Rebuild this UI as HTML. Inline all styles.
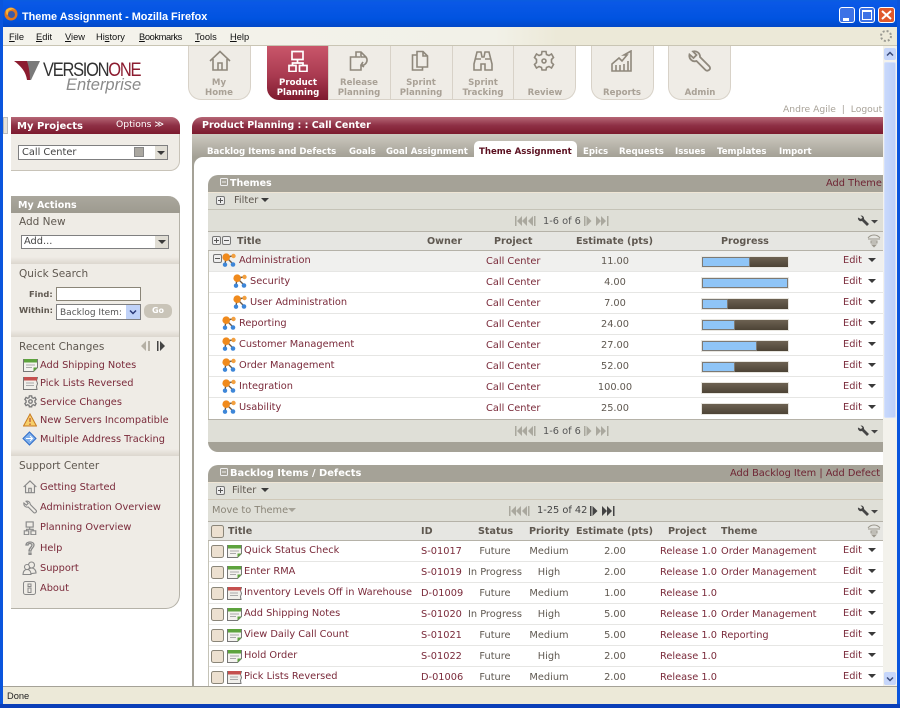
<!DOCTYPE html>
<html lang="en"><head><meta charset="utf-8"><title>Theme Assignment - Mozilla Firefox</title>
<style>
html,body{margin:0;padding:0;background:#fff;overflow:hidden}
#p{position:relative;width:900px;height:708px;overflow:hidden;background:#fff;font:9.8px/12px "DejaVu Sans",sans-serif;color:#5f5850;filter:blur(.3px)}
#p div,#p svg,#p span{position:absolute}
.t{white-space:nowrap;margin-top:1px}
.b{font-weight:bold}
.w{color:#fff}
.l{color:#7a2a3a}
.h{font-size:10.500px;color:#5f5850}
.m{font:9.300px/12px "Liberation Sans",sans-serif;color:#111;top:30px}
.m u{position:static}
.nav{top:46px;height:54px;background:#efece6;border:1px solid #d8d2c8;border-top:0;box-sizing:border-box}
.nt{width:62px;text-align:center;font-weight:bold;font-size:8.6px;line-height:10px;color:#a9a196;top:78px}
.tab{top:146px;font-weight:bold;font-size:8.6px;color:#fff;white-space:nowrap}
.r{left:209px;width:674px;height:21px;background:#fff;border-bottom:1px solid #e6e6e4;box-sizing:content-box}
.r span{white-space:nowrap;top:5px}
.r .u{top:4px;color:#7a2a3a}
.r .cc{left:277px;color:#7a2a3a}
.r .est{left:356px;width:100px;text-align:center}
.r .ed{left:634px;top:4px;color:#7a2a3a}
.r .id{left:212px;color:#7a2a3a}
.r .st{left:236px;width:100px;text-align:center}
.r .pr{left:290px;width:100px;text-align:center}
.r .pj{left:451px;color:#7a2a3a}
.r .th{left:512px;color:#7a2a3a}
.pb{left:493px;top:6px;width:86px;height:10px;background:linear-gradient(#6d6252,#4d4436);outline:1px solid #e8e6e0}
.pb div{left:0;top:0;height:8px;background:#8fc5f7;border:1px solid #7d7a74}
.ca{width:0;height:0;border-left:4px solid transparent;border-right:4px solid transparent;border-top:4px solid #3a3a3a}
.hd{font-weight:bold;color:#5f5850;font-size:9.600px}
.sb{background:#dfdfd7}
.li{left:40px;color:#7a2a3a;white-space:nowrap;margin-top:3px}
.h{margin-top:1px}
.sel{background:#fff;border:1px solid #7f7f80;box-sizing:border-box;margin-top:0}
.dv{left:11px;width:168px;height:7px;background:linear-gradient(#efece6,#dcd7ce)}
</style></head><body>
<svg width="0" height="0" style="position:absolute">
<defs>
<symbol id="theme" viewBox="0 0 14 14"><path d="M4 4L11 11M4 4L3 12M4 4L11 3" stroke="#6b5a48" stroke-width="1.4" fill="none"/><circle cx="4.200" cy="4.200" r="3.800" fill="#f08a1c"/><circle cx="11.500" cy="3" r="2.200" fill="#f2a040"/><circle cx="3" cy="11.700" r="2.200" fill="#3d86d8"/><circle cx="11" cy="11.500" r="2.300" fill="#3d86d8"/></symbol>
<symbol id="story" viewBox="0 0 15 14"><path d="M.5 1.500h14v8l-4 4H.5z" fill="#f4f3ef" stroke="#777"/><rect x="1" y="1" width="13" height="3.500" fill="#5da33d"/><path d="M3 7h9M3 9.500h6" stroke="#aaa"/><path d="M10.500 13.500v-4h4z" fill="#5da33d"/></symbol>
<symbol id="defect" viewBox="0 0 15 14"><path d="M.5 1.500h14l-1 3 1 3-1 3 .5 3H.5z" fill="#f0efea" stroke="#777"/><rect x="1" y="1" width="13" height="3.500" fill="#c5504f"/><path d="M3 7h8M3 9.500h8" stroke="#aaa"/></symbol>
<symbol id="wr" viewBox="0 0 22 12"><path d="M2 2.500a3 3 0 0 0 4 3.500l5 5 2-2-5-5a3 3 0 0 0-3.500-3.500l2 2-1.500 1.500z" fill="#444"/><path d="M15 5h7l-3.500 3.500z" fill="#444"/></symbol>
<symbol id="cfg" viewBox="0 0 14 14"><path d="M1 4c3-4 9-4 12 0M1 5h12M4 7h6v2H4z" stroke="#9a968c" fill="none"/><path d="M4 10.500h6l-3 3z" fill="#9a968c"/></symbol>
<symbol id="bk" viewBox="0 0 25 10"><path d="M0 0h1.500v10H0zM7 0L2 5l5 5zM12 0L7 5l5 5zM18 0l-5 5 5 5zM19 0h1.500v10H19z" fill="currentColor"/></symbol>
<symbol id="fw" viewBox="0 0 25 10"><path d="M0 0h1.500v10H0zM2.500 0l5 5-5 5zM12 0l5 5-5 5zM17 0l5 5-5 5zM23 0h1.500v10H23z" fill="currentColor"/></symbol>
<symbol id="pm" viewBox="0 0 9 9"><rect x=".5" y=".5" width="8" height="8" rx="1.500" fill="#eee" stroke="#777"/><path d="M2 4.500h5" stroke="#555"/></symbol>
<symbol id="pp" viewBox="0 0 9 9"><rect x=".5" y=".5" width="8" height="8" rx="1.500" fill="#eee" stroke="#777"/><path d="M2 4.500h5M4.500 2v5" stroke="#555"/></symbol>
<symbol id="cb" viewBox="0 0 13 13"><rect x=".5" y=".5" width="12" height="12" rx="2" fill="#ece0d0" stroke="#8a8578"/></symbol>
</defs></svg>
<div id="p">
<!-- window chrome -->
<div style="left:0;top:0;width:900px;height:27px;background:linear-gradient(#0a5de0 0,#0a58e6 10%,#0053e0 70%,#0248c8 100%)"></div>
<div style="left:0;top:0;width:3px;height:708px;background:#0a55dd"></div>
<div style="left:897px;top:0;width:3px;height:708px;background:#0a55dd"></div>
<svg style="left:4px;top:7px" width="14" height="14" viewBox="0 0 14 14"><circle cx="7" cy="7" r="6.500" fill="#e2771c"/><circle cx="7.500" cy="7.500" r="3.500" fill="#3b5aa8"/><path d="M2 3c3-3 7-3 9 0-2-1-3-1-4 0-2 0-3 1-3 3 0 1 0 2-1 2-1-1-1-3-1-5z" fill="#f5b53b"/></svg>
<div class="t w" style="left:22px;top:9px;font:bold 10.900px/14px 'Liberation Sans',sans-serif">Theme Assignment - Mozilla Firefox</div>
<div style="left:839px;top:7px;width:16px;height:16px;background:#3d72e6;border:1px solid #fff;border-radius:3px;box-sizing:border-box"><div style="left:3px;top:10px;width:6px;height:3px;background:#fff"></div></div>
<div style="left:859px;top:7px;width:16px;height:16px;background:#3d72e6;border:1px solid #fff;border-radius:3px;box-sizing:border-box"><div style="left:2px;top:2px;width:10px;height:10px;border:1px solid #fff;border-top-width:2px;box-sizing:border-box"></div></div>
<div style="left:878px;top:7px;width:17px;height:16px;background:#e0592c;border:1px solid #fff;border-radius:3px;box-sizing:border-box"><svg style="left:2px;top:2px" width="11" height="10"><path d="M1 1l9 8M10 1L1 9" stroke="#fff" stroke-width="2"/></svg></div>
<!-- menu -->
<div style="left:3px;top:27px;width:894px;height:19px;background:linear-gradient(90deg,#f4f3ec 0,#f2f1e8 55%,#ece9d8 62%);border-bottom:1px solid #c9c5b4;box-sizing:border-box"></div>
<div class="t m" style="left:9px"><u>F</u>ile</div>
<div class="t m" style="left:36px"><u>E</u>dit</div>
<div class="t m" style="left:65px"><u>V</u>iew</div>
<div class="t m" style="left:96px">Hi<u>s</u>tory</div>
<div class="t m" style="left:139px;letter-spacing:-.4px"><u>B</u>ookmarks</div>
<div class="t m" style="left:195px"><u>T</u>ools</div>
<div class="t m" style="left:230px"><u>H</u>elp</div>
<svg style="left:879px;top:29px" width="14" height="14"><circle cx="7" cy="7" r="5" fill="none" stroke="#9a9a92" stroke-width="2" stroke-dasharray="2 2"/></svg>
<!-- scrollbar -->
<div style="left:883px;top:46px;width:14px;height:640px;background:#f3f2ec"></div>
<div style="left:884px;top:48px;width:12px;height:12px;background:#c6d6fa;border-radius:2px"><svg style="left:2px;top:3px" width="8" height="6"><path d="M1 4.500L4 1.500 7 4.500" fill="none" stroke="#3a4a78" stroke-width="1.500"/></svg></div>
<div style="left:884px;top:62px;width:12px;height:356px;background:linear-gradient(90deg,#c8d8fb,#bcd0fa);border-radius:2px;border:1px solid #d4e0fc;box-sizing:border-box"></div>
<div style="left:884px;top:672px;width:12px;height:13px;background:#c6d6fa;border-radius:2px"><svg style="left:2px;top:4px" width="8" height="6"><path d="M1 1.500L4 4.500 7 1.500" fill="none" stroke="#3a4a78" stroke-width="1.500"/></svg></div>
<!-- logo -->
<svg style="left:13px;top:60px" width="30" height="21" viewBox="0 0 30 21"><path d="M14 1h13L18 20h-3z" fill="#7a7a7a"/><path d="M1 1h13c2 6 3 13 3 19h-3C13 12 8 6 1 1z" fill="#8c1c30"/></svg>
<div class="t" style="left:43px;top:60px;margin-top:0;font:19.500px/20px 'Liberation Sans',sans-serif;letter-spacing:-1.500px;color:#333;transform:scaleX(.845);transform-origin:0 0">VERSION<span style="position:static;color:#8c1c30">ONE</span></div>
<div class="t" style="left:66px;top:77px;margin-top:0;font:italic 16.500px/17px 'Liberation Sans',sans-serif;color:#8a8a8a">Enterprise</div>
<!-- nav -->
<div class="nav" style="left:188px;width:63px;border-radius:0 0 13px 13px"></div>
<div style="left:267px;top:46px;width:61px;height:54px;background:linear-gradient(#c9566a,#a93a50 55%,#7e1a2e);border-radius:0 0 0 12px"></div>
<div class="nav" style="left:328px;width:63px"></div>
<div class="nav" style="left:390px;width:63px"></div>
<div class="nav" style="left:452px;width:62px"></div>
<div class="nav" style="left:513px;width:63px;border-radius:0 0 13px 0"></div>
<div class="nav" style="left:591px;width:63px;border-radius:0 0 13px 13px"></div>
<div class="nav" style="left:668px;width:63px;border-radius:0 0 13px 13px"></div>
<svg style="left:209px;top:50px" width="22" height="22" viewBox="0 0 22 22" fill="none" stroke="#8f887c" stroke-width="1.600"><path d="M1 11L11 1.500 21 11M4 9v11h14V9M9 20v-7h4v7"/></svg>
<svg style="left:287px;top:50px" width="22" height="22" viewBox="0 0 22 22" fill="none" stroke="#fff" stroke-width="1.700"><path d="M5 1.500h11v8H5zM2 15.500h7v6H2zM12.500 15.500h7.500v6h-7.500zM10.500 9.500v3.500M5.500 15.500V13H16v2.500"/></svg>
<svg style="left:349px;top:50px" width="20" height="22" viewBox="0 0 20 22" fill="none" stroke="#8f887c" stroke-width="1.600"><path d="M11 7H1.500v13H12v-5M7 7V2h5l5 5c2 3 1 6-2 8h-3M12 2v5h5M14 12l-2 3 3 2"/></svg>
<svg style="left:411px;top:50px" width="18" height="22" viewBox="0 0 18 22" fill="none" stroke="#8f887c" stroke-width="1.600"><path d="M6 5H1.500v15h10v-3M6 1.500h6l4.500 4.500v11H6zM12 1.500V6h4.500"/></svg>
<svg style="left:472px;top:50px" width="22" height="22" viewBox="0 0 22 22" fill="none" stroke="#8f887c" stroke-width="1.600"><path d="M5 2h4l1 5h2l1-5h4l3 12v6h-7v-6H9v6H2v-6zM4 9h5M13 9h5"/></svg>
<svg style="left:533px;top:50px" width="22" height="22" viewBox="0 0 22 22" fill="none" stroke="#8f887c" stroke-width="1.600"><path d="M9 1.500h4l.5 3 2.500 1 2.500-1.500 2 3.500-2 2v3l2 2-2 3.500-2.500-1.500-2.500 1-.5 2.500H9l-.5-2.500-2.500-1-2.500 1.500-2-3.500 2-2v-3l-2-2 2-3.500L6 5.500l2.500-1z"/><circle cx="11" cy="11" r="2"/></svg>
<svg style="left:611px;top:50px" width="22" height="22" viewBox="0 0 22 22" fill="none" stroke="#8f887c" stroke-width="1.600"><path d="M1 21V14L8 8l3 3 5-6h-3l7-4v20zM5 21v-6M9 21v-6M13 21v-7M17 21V11"/></svg>
<svg style="left:688px;top:50px" width="23" height="22" viewBox="0 0 23 22" fill="none" stroke="#8f887c" stroke-width="1.800"><path d="M1.500 4.500a5.500 5.500 0 0 0 7 6.500l9 9c1 1 3 1 4-.5 1-1 .5-2.500-.5-3.500l-9-9A5.500 5.500 0 0 0 5 1.500L8.500 5 5.500 8z"/></svg>
<div class="nt" style="left:188px">My<br>Home</div>
<div class="nt" style="left:267px;color:#fff">Product<br>Planning</div>
<div class="nt" style="left:328px">Release<br>Planning</div>
<div class="nt" style="left:390px">Sprint<br>Planning</div>
<div class="nt" style="left:452px">Sprint<br>Tracking</div>
<div class="nt" style="left:514px;top:88px">Review</div>
<div class="nt" style="left:591px;top:88px">Reports</div>
<div class="nt" style="left:669px;top:88px">Admin</div>
<div class="t" style="left:783px;top:103px;color:#a8a298;font-size:9.200px">Andre Agile&nbsp; |&nbsp; Logout</div>
<!-- left: my projects -->
<div style="left:3px;top:117px;width:5px;height:17px;background:#e6e3da;border:1px solid #bbb;box-sizing:border-box"></div>
<div style="left:11px;top:117px;width:169px;height:54px;background:#efece6;border-right:1px solid #c8c3b8;border-bottom:1px solid #c8c3b8;border-radius:0 10px 10px 0;box-sizing:border-box"></div>
<div style="left:11px;top:117px;width:169px;height:17px;background:linear-gradient(#b56675,#8e3045 50%,#7c1a2e);border-radius:0 9px 0 0"></div>
<div class="t w b" style="left:17px;top:120px;font-size:10px">My Projects</div>
<div class="t w" style="left:116px;top:118px;font-size:9.200px">Options ≫</div>
<div class="sel t" style="left:18px;top:145px;width:150px;height:15px;padding:1px 0 0 3px;color:#444;margin-top:0">Call Center</div>
<div style="left:134px;top:147px;width:10px;height:10px;background:#aaa7a0;border:1px solid #888;box-sizing:border-box"></div>
<div style="left:155px;top:146px;width:12px;height:13px;background:#e0ddd4"></div>
<div class="ca" style="left:157px;top:151px"></div>
<!-- left: my actions -->
<div style="left:11px;top:196px;width:169px;height:413px;background:#efece6;border-right:1px solid #b5b2a8;border-bottom:1px solid #b5b2a8;border-radius:0 12px 14px 0;box-sizing:border-box"></div>
<div style="left:11px;top:196px;width:169px;height:17px;background:linear-gradient(#aaa79d,#9d9a8f);border-radius:0 12px 0 0"></div>
<div class="t w b" style="left:18px;top:199px;font-size:9.500px">My Actions</div>
<div class="t h" style="left:19px;top:215px">Add New</div>
<div class="sel t" style="left:21px;top:235px;width:148px;height:14px;padding:0 0 0 2px;color:#444;margin-top:0">Add...</div>
<div style="left:155px;top:236px;width:13px;height:12px;background:#e0ddd4"></div>
<div class="ca" style="left:158px;top:240px"></div>
<div class="dv" style="top:257px"></div>
<div class="t h" style="left:19px;top:267px">Quick Search</div>
<div class="t b" style="left:29px;top:287px;font-size:8.300px">Find:</div>
<div class="sel" style="left:56px;top:287px;width:85px;height:14px;border-color:#8a8578"></div>
<div class="t b" style="left:19px;top:303px;font-size:8.300px">Within:</div>
<div class="sel t" style="left:56px;top:304px;width:85px;height:16px;padding:2px 0 0 3px;font-size:9px;color:#555;overflow:hidden;margin-top:0">Backlog Item:</div>
<div style="left:126px;top:305px;width:14px;height:14px;background:#c0d2f8"><svg style="left:3px;top:4px" width="8" height="6"><path d="M1 1.500L4 4.500 7 1.500" fill="none" stroke="#2a3a78" stroke-width="1.500"/></svg></div>
<div class="t b w" style="left:144px;top:304px;width:28px;height:14px;background:#c9c4b8;border-radius:6px;text-align:center;font-size:8px;line-height:14px;margin-top:0">Go</div>
<div class="dv" style="top:330px"></div>
<div class="t h" style="left:19px;top:340px">Recent Changes</div>
<svg style="left:141px;top:341px;color:#b5b0a5" width="10" height="10"><path d="M5 0L0 5l5 5zM7 0h2v10H7z" fill="currentColor"/></svg>
<svg style="left:157px;top:341px;color:#444" width="10" height="10"><path d="M0 0h1.500v10H0zM3 0l5 5-5 5z" fill="currentColor"/></svg>
<svg style="left:23px;top:358px" width="15" height="14"><use href="#story"/></svg>
<svg style="left:23px;top:376px" width="15" height="14"><use href="#defect"/></svg>
<svg style="left:24px;top:395px" width="13" height="13" viewBox="0 0 22 22" fill="none" stroke="#777" stroke-width="2.200"><path d="M9 1.500h4l.5 3 2.500 1 2.500-1.500 2 3.500-2 2v3l2 2-2 3.500-2.500-1.500-2.500 1-.5 2.500H9l-.5-2.500-2.500-1-2.500 1.500-2-3.500 2-2v-3l-2-2 2-3.500L6 5.500l2.500-1z"/><circle cx="11" cy="11" r="3"/></svg>
<svg style="left:23px;top:413px" width="14" height="14"><path d="M7 1l6.500 12H.5z" fill="#f6cf6a" stroke="#c87a20"/><path d="M7 5v4M7 10.500v1.500" stroke="#a33"/></svg>
<svg style="left:22px;top:431px" width="15" height="15"><path d="M7.500 1l6.500 6.500-6.500 6.500L1 7.500z" fill="#7fb0ec" stroke="#2f6cc8"/><path d="M4 7.500h6M8 5l2.500 2.500L8 10" stroke="#fff" fill="none"/></svg>
<div class="t li" style="top:357px">Add Shipping Notes</div>
<div class="t li" style="top:375px">Pick Lists Reversed</div>
<div class="t li" style="top:394px">Service Changes</div>
<div class="t li" style="top:412px">New Servers Incompatible</div>
<div class="t li" style="top:431px">Multiple Address Tracking</div>
<div class="dv" style="top:449px"></div>
<div class="t h" style="left:19px;top:459px">Support Center</div>
<svg style="left:23px;top:480px" width="14" height="14" viewBox="0 0 22 22" fill="none" stroke="#888" stroke-width="1.800"><path d="M1 11L11 1.500 21 11M4 9v11h14V9M9 20v-7h4v7"/></svg>
<svg style="left:23px;top:500px" width="14" height="14" viewBox="0 0 23 22" fill="none" stroke="#888" stroke-width="1.800"><path d="M1.500 4.500a5.500 5.500 0 0 0 7 6.500l9 9c1 1 3 1 4-.5 1-1 .5-2.500-.5-3.500l-9-9A5.500 5.500 0 0 0 5 1.500L8.500 5 5.500 8z"/></svg>
<svg style="left:23px;top:521px" width="14" height="14" viewBox="0 0 22 22" fill="none" stroke="#888" stroke-width="1.800"><path d="M5 1.500h11v8H5zM2 15.500h7v6H2zM12.500 15.500h7.500v6h-7.500zM10.500 9.500v3.500M5.500 15.500V13H16v2.500"/></svg>
<svg style="left:25px;top:541px" width="10" height="14" viewBox="0 0 10 14" fill="none" stroke="#888" stroke-width="1.300"><path d="M1 4c0-4 8-4 8 0 0 3-3 3-3 6H4c0-3 3-4 3-6 0-2-4-2-4 0zM4 12h2v1.500H4z"/></svg>
<svg style="left:22px;top:561px" width="15" height="14" viewBox="0 0 15 14" fill="none" stroke="#888" stroke-width="1.100"><circle cx="9.500" cy="4" r="3"/><path d="M5 13c0-4 2-6 4.500-6s4.500 2 4.500 5z"/><circle cx="5" cy="6" r="2.500" fill="#efece6"/><path d="M1 13.500c0-3 1.500-5 4-5s4 2 4 5z" fill="#efece6"/></svg>
<svg style="left:23px;top:581px" width="13" height="14" viewBox="0 0 13 14" fill="none" stroke="#888"><rect x=".5" y=".5" width="12" height="13" rx="2"/><rect x="5" y="3" width="3" height="2.500"/><rect x="5" y="7" width="3" height="4.500"/></svg>
<div class="t li" style="top:479px">Getting Started</div>
<div class="t li" style="top:499px">Administration Overview</div>
<div class="t li" style="top:519px">Planning Overview</div>
<div class="t li" style="top:540px">Help</div>
<div class="t li" style="top:560px">Support</div>
<div class="t li" style="top:580px">About</div>
<!-- main panel -->
<div style="left:192px;top:134px;width:2px;height:552px;background:#a5a297"></div>
<div style="left:192px;top:117px;width:691px;height:17px;background:linear-gradient(#b56675,#8e3045 50%,#7c1a2e);border-radius:10px 0 0 0"></div>
<div class="t w b" style="left:202px;top:120px;font-size:9.500px;margin-top:0">Product Planning : : Call Center</div>
<div style="left:192px;top:134px;width:691px;height:35px;background:linear-gradient(#cdc9c0,#a3a095 66%)"></div>
<div style="left:194px;top:157px;width:689px;height:529px;background:#fff;border-radius:9px 0 0 0"></div>
<div class="tab" style="left:207px">Backlog Items and Defects</div>
<div class="tab" style="left:349px">Goals</div>
<div class="tab" style="left:386px">Goal Assignment</div>
<div style="left:474px;top:141px;width:103px;height:17px;background:#fff;border-radius:5px 5px 0 0"></div>
<div class="tab" style="left:479px;color:#5b1020">Theme Assignment</div>
<div class="tab" style="left:583px">Epics</div>
<div class="tab" style="left:619px">Requests</div>
<div class="tab" style="left:675px">Issues</div>
<div class="tab" style="left:717px">Templates</div>
<div class="tab" style="left:779px">Import</div>
<!-- themes panel -->
<div style="left:208px;top:175px;width:675px;height:17px;background:#a5a297;border-radius:10px 0 0 0"></div>
<svg style="left:220px;top:178px" width="8" height="8"><rect x=".5" y=".5" width="7" height="7" rx="1" fill="none" stroke="#eee"/><path d="M2 4h4" stroke="#eee"/></svg>
<div class="t w b" style="left:230px;top:177px;font-size:9.500px">Themes</div>
<div class="t l" style="left:826px;top:177px;color:#6e2433">Add Theme</div>
<div class="sb" style="left:208px;top:192px;width:675px;height:40px;border-top:1px solid #efe6d6;box-sizing:border-box"></div>
<div style="left:208px;top:209px;width:675px;height:1px;background:#c5c3b7"></div>
<svg style="left:216px;top:196px" width="9" height="9"><use href="#pp"/></svg>
<div class="t" style="left:234px;top:194px">Filter</div>
<div class="ca" style="left:261px;top:198px"></div>
<svg style="left:515px;top:216px;color:#aaa89e" width="25" height="10"><use href="#bk"/></svg>
<div class="t" style="left:543px;top:215px;color:#555">1-6 of 6</div>
<svg style="left:584px;top:216px;color:#aaa89e" width="25" height="10"><use href="#fw"/></svg>
<svg style="left:856px;top:215px" width="22" height="12"><use href="#wr"/></svg>
<div style="left:208px;top:231px;width:675px;height:20px;background:#e6e6e2;border-top:1px solid #b5b2a8;border-bottom:1px solid #b5b2a8;box-sizing:border-box"></div>
<svg style="left:212px;top:236px" width="9" height="9"><use href="#pp"/></svg>
<svg style="left:222px;top:236px" width="9" height="9"><use href="#pm"/></svg>
<div class="t hd" style="left:237px;top:235px">Title</div>
<div class="t hd" style="left:427px;top:235px">Owner</div>
<div class="t hd" style="left:494px;top:235px">Project</div>
<div class="t hd" style="left:576px;top:235px">Estimate (pts)</div>
<div class="t hd" style="left:721px;top:235px">Progress</div>
<svg style="left:867px;top:234px" width="14" height="14"><use href="#cfg"/></svg>
<div style="left:208px;top:251px;width:1px;height:169px;background:#c5c3b7"></div>

<div class="r" style="top:251px;height:20px;background:#f0f0ee"><svg style="left:4px;top:3px" width="9" height="9"><use href="#pm"/></svg><svg style="left:13px;top:2px" width="14" height="14"><use href="#theme"/></svg><span class="u" style="left:30px">Administration</span><span class="cc">Call Center</span><span class="est">11.00</span><div class="pb"><div style="width:46px"></div></div><span class="ed">Edit</span><div class="ca" style="left:659px;top:7px"></div></div>
<div class="r" style="top:272px;height:20px"><svg style="left:24px;top:2px" width="14" height="14"><use href="#theme"/></svg><span class="u" style="left:41px">Security</span><span class="cc">Call Center</span><span class="est">4.00</span><div class="pb"><div style="width:84px"></div></div><span class="ed">Edit</span><div class="ca" style="left:659px;top:7px"></div></div>
<div class="r" style="top:293px;height:20px"><svg style="left:24px;top:2px" width="14" height="14"><use href="#theme"/></svg><span class="u" style="left:41px">User Administration</span><span class="cc">Call Center</span><span class="est">7.00</span><div class="pb"><div style="width:24px"></div></div><span class="ed">Edit</span><div class="ca" style="left:659px;top:7px"></div></div>
<div class="r" style="top:314px;height:20px"><svg style="left:13px;top:2px" width="14" height="14"><use href="#theme"/></svg><span class="u" style="left:30px">Reporting</span><span class="cc">Call Center</span><span class="est">24.00</span><div class="pb"><div style="width:31px"></div></div><span class="ed">Edit</span><div class="ca" style="left:659px;top:7px"></div></div>
<div class="r" style="top:335px;height:20px"><svg style="left:13px;top:2px" width="14" height="14"><use href="#theme"/></svg><span class="u" style="left:30px">Customer Management</span><span class="cc">Call Center</span><span class="est">27.00</span><div class="pb"><div style="width:53px"></div></div><span class="ed">Edit</span><div class="ca" style="left:659px;top:7px"></div></div>
<div class="r" style="top:356px;height:20px"><svg style="left:13px;top:2px" width="14" height="14"><use href="#theme"/></svg><span class="u" style="left:30px">Order Management</span><span class="cc">Call Center</span><span class="est">52.00</span><div class="pb"><div style="width:31px"></div></div><span class="ed">Edit</span><div class="ca" style="left:659px;top:7px"></div></div>
<div class="r" style="top:377px;height:20px"><svg style="left:13px;top:2px" width="14" height="14"><use href="#theme"/></svg><span class="u" style="left:30px">Integration</span><span class="cc">Call Center</span><span class="est">100.00</span><div class="pb"></div><span class="ed">Edit</span><div class="ca" style="left:659px;top:7px"></div></div>
<div class="r" style="top:398px;height:20px;border-bottom:0"><svg style="left:13px;top:2px" width="14" height="14"><use href="#theme"/></svg><span class="u" style="left:30px">Usability</span><span class="cc">Call Center</span><span class="est">25.00</span><div class="pb"></div><span class="ed">Edit</span><div class="ca" style="left:659px;top:7px"></div></div>

<div class="sb" style="left:208px;top:419px;width:675px;height:23px;border-top:1px solid #b5b2a8;box-sizing:border-box"></div>
<svg style="left:515px;top:426px;color:#aaa89e" width="25" height="10"><use href="#bk"/></svg>
<div class="t" style="left:543px;top:425px;color:#555">1-6 of 6</div>
<svg style="left:584px;top:426px;color:#aaa89e" width="25" height="10"><use href="#fw"/></svg>
<svg style="left:856px;top:425px" width="22" height="12"><use href="#wr"/></svg>
<div style="left:208px;top:442px;width:675px;height:10px;background:#a5a297;border-radius:0 0 0 10px"></div>
<!-- backlog panel -->
<div style="left:208px;top:465px;width:675px;height:17px;background:#a5a297;border-radius:10px 0 0 0"></div>
<svg style="left:220px;top:468px" width="8" height="8"><rect x=".5" y=".5" width="7" height="7" rx="1" fill="none" stroke="#eee"/><path d="M2 4h4" stroke="#eee"/></svg>
<div class="t w b" style="left:230px;top:467px;font-size:9.900px">Backlog Items / Defects</div>
<div class="t" style="left:730px;top:467px;color:#6e2433">Add Backlog Item | Add Defect</div>
<div class="sb" style="left:208px;top:482px;width:675px;height:40px;border-top:1px solid #efe6d6;box-sizing:border-box"></div>
<div style="left:208px;top:499px;width:675px;height:1px;background:#cfc8b8"></div>
<svg style="left:216px;top:486px" width="9" height="9"><use href="#pp"/></svg>
<div class="t" style="left:232px;top:484px">Filter</div>
<div class="ca" style="left:261px;top:488px"></div>
<div class="t" style="left:212px;top:504px;color:#8a8578">Move to Theme</div>
<div class="ca" style="left:288px;top:508px;border-top-color:#a5a297"></div>
<svg style="left:509px;top:506px;color:#aaa89e" width="25" height="10"><use href="#bk"/></svg>
<div class="t" style="left:537px;top:504px;color:#444">1-25 of 42</div>
<svg style="left:590px;top:506px;color:#444" width="25" height="10"><use href="#fw"/></svg>
<svg style="left:856px;top:505px" width="22" height="12"><use href="#wr"/></svg>
<div style="left:208px;top:521px;width:675px;height:20px;background:#e6e6e2;border-top:1px solid #b5b2a8;border-bottom:1px solid #b5b2a8;box-sizing:border-box"></div>
<svg style="left:211px;top:525px" width="13" height="13"><use href="#cb"/></svg>
<div class="t hd" style="left:228px;top:525px">Title</div>
<div class="t hd" style="left:421px;top:525px">ID</div>
<div class="t hd" style="left:478px;top:525px">Status</div>
<div class="t hd" style="left:529px;top:525px">Priority</div>
<div class="t hd" style="left:576px;top:525px">Estimate (pts)</div>
<div class="t hd" style="left:668px;top:525px">Project</div>
<div class="t hd" style="left:721px;top:525px">Theme</div>
<svg style="left:867px;top:524px" width="14" height="14"><use href="#cfg"/></svg>
<div style="left:208px;top:541px;width:1px;height:145px;background:#c5c3b7"></div>

<div class="r" style="top:541px;height:20px"><svg style="left:2px;top:4px" width="13" height="13"><use href="#cb"/></svg><svg style="left:18px;top:3px" width="15" height="14"><use href="#story"/></svg><span class="u" style="left:35px">Quick Status Check</span><span class="id">S-01017</span><span class="st">Future</span><span class="pr">Medium</span><span class="est">2.00</span><span class="pj">Release 1.0</span><span class="th">Order Management</span><span class="ed">Edit</span><div class="ca" style="left:659px;top:7px"></div></div>
<div class="r" style="top:562px;height:20px"><svg style="left:2px;top:4px" width="13" height="13"><use href="#cb"/></svg><svg style="left:18px;top:3px" width="15" height="14"><use href="#story"/></svg><span class="u" style="left:35px">Enter RMA</span><span class="id">S-01019</span><span class="st">In Progress</span><span class="pr">High</span><span class="est">2.00</span><span class="pj">Release 1.0</span><span class="th">Order Management</span><span class="ed">Edit</span><div class="ca" style="left:659px;top:7px"></div></div>
<div class="r" style="top:583px;height:20px"><svg style="left:2px;top:4px" width="13" height="13"><use href="#cb"/></svg><svg style="left:18px;top:3px" width="15" height="14"><use href="#defect"/></svg><span class="u" style="left:35px">Inventory Levels Off in Warehouse</span><span class="id">D-01009</span><span class="st">Future</span><span class="pr">Medium</span><span class="est">1.00</span><span class="pj">Release 1.0</span><span class="ed">Edit</span><div class="ca" style="left:659px;top:7px"></div></div>
<div class="r" style="top:604px;height:20px"><svg style="left:2px;top:4px" width="13" height="13"><use href="#cb"/></svg><svg style="left:18px;top:3px" width="15" height="14"><use href="#story"/></svg><span class="u" style="left:35px">Add Shipping Notes</span><span class="id">S-01020</span><span class="st">In Progress</span><span class="pr">High</span><span class="est">5.00</span><span class="pj">Release 1.0</span><span class="th">Order Management</span><span class="ed">Edit</span><div class="ca" style="left:659px;top:7px"></div></div>
<div class="r" style="top:625px;height:20px"><svg style="left:2px;top:4px" width="13" height="13"><use href="#cb"/></svg><svg style="left:18px;top:3px" width="15" height="14"><use href="#story"/></svg><span class="u" style="left:35px">View Daily Call Count</span><span class="id">S-01021</span><span class="st">Future</span><span class="pr">Medium</span><span class="est">5.00</span><span class="pj">Release 1.0</span><span class="th">Reporting</span><span class="ed">Edit</span><div class="ca" style="left:659px;top:7px"></div></div>
<div class="r" style="top:646px;height:20px"><svg style="left:2px;top:4px" width="13" height="13"><use href="#cb"/></svg><svg style="left:18px;top:3px" width="15" height="14"><use href="#story"/></svg><span class="u" style="left:35px">Hold Order</span><span class="id">S-01022</span><span class="st">Future</span><span class="pr">High</span><span class="est">2.00</span><span class="pj">Release 1.0</span><span class="ed">Edit</span><div class="ca" style="left:659px;top:7px"></div></div>
<div class="r" style="top:667px;height:19px;border-bottom:0"><svg style="left:2px;top:4px" width="13" height="13"><use href="#cb"/></svg><svg style="left:18px;top:3px" width="15" height="14"><use href="#defect"/></svg><span class="u" style="left:35px">Pick Lists Reversed</span><span class="id">D-01006</span><span class="st">Future</span><span class="pr">Medium</span><span class="est">2.00</span><span class="pj">Release 1.0</span><span class="ed">Edit</span><div class="ca" style="left:659px;top:7px"></div></div>
<!-- status bar -->
<div style="left:3px;top:686px;width:894px;height:18px;background:#ece9d8;border-top:1px solid #a5a297;box-sizing:border-box"></div>
<div class="t" style="left:7px;top:689px;font:9.300px/12px 'Liberation Sans',sans-serif;color:#222">Done</div>
<div style="left:0;top:704px;width:900px;height:4px;background:#0a3fb8"></div>
</div>
</body></html>
